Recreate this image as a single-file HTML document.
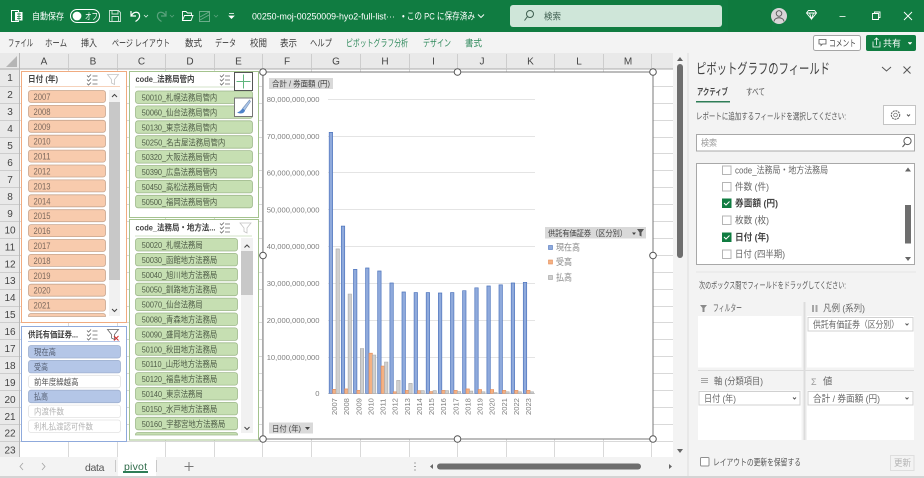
<!DOCTYPE html>
<html lang="ja"><head><meta charset="utf-8"><title>Excel pivot</title>
<style>
html,body{margin:0;padding:0;background:#fff;overflow:hidden}
svg{display:block}
text{font-family:"Liberation Sans","Noto Sans CJK JP",sans-serif;font-size:9px;fill:#555}
.w text{fill:#fff}
.ax text{font-size:7.6px;fill:#7f7f7f}
.h text{font-size:10px;fill:#444;text-anchor:middle}
.rb text{font-size:9.6px;fill:#3c3c3c}
.o rect{fill:#f8cbad;stroke:#c8a68f;stroke-width:.8}
.o text{fill:#7d6a5e}
.g rect{fill:#c6dfb2;stroke:#9fb98c;stroke-width:.8}
.g text{fill:#4f5c47;font-size:8.4px}
.b rect{fill:#b4c6e7;stroke:#9fb0cf;stroke-width:.8}
.b text{fill:#555f72;font-size:8.4px}
.n rect{fill:#fff;stroke:#e2e2e2;stroke-width:.8}
.n text{font-size:8.4px}
.t text{font-weight:bold;fill:#444;font-size:8.6px}
.ic{fill:none;stroke:#666;stroke-width:.8}
.p text{font-size:9.4px;fill:#666}
</style></head>
<body>
<svg width="924" height="478" viewBox="0 0 924 478" xmlns="http://www.w3.org/2000/svg">
<rect width="924" height="478" fill="#fff"/>

<!-- grid -->
<path fill="none" stroke="#d9d9d9" stroke-width="1" d="M68.5 69V457M117.5 69V457M165.5 69V457M214.5 69V457M262.5 69V457M311.5 69V457M360.5 69V457M409.5 69V457M457.5 69V457M506.5 69V457M554.5 69V457M603.5 69V457M651.5 69V457M20 86.5H673M20 103.5H673M20 120.5H673M20 137.5H673M20 153.5H673M20 170.5H673M20 187.5H673M20 204.5H673M20 221.5H673M20 238.5H673M20 255.5H673M20 272.5H673M20 289.5H673M20 306.5H673M20 322.5H673M20 339.5H673M20 356.5H673M20 373.5H673M20 390.5H673M20 407.5H673M20 424.5H673M20 441.5H673"/>

<!-- title bar -->
<rect width="924" height="32" fill="#107c41"/>
<rect x="728" y="0" width="44" height="32" fill="#0f7a3e"/>
<g class="w">
<rect x="11.5" y="10.5" width="7" height="11" fill="none" stroke="#fff"/><rect x="15" y="12" width="7.5" height="8.5" fill="#fff"/><path d="M17 14h4M17 16.5h4M17 18.5h4M19 12.5v8" stroke="#107c41" stroke-width=".7"/>
<text x="32" y="19.4" textLength="32" lengthAdjust="spacingAndGlyphs" style="font-size:9px">自動保存</text>
<rect x="70.5" y="9.5" width="29" height="13" rx="6.5" fill="none" stroke="#fff"/><circle cx="77" cy="16" r="4.4" fill="#fff"/>
<text x="85" y="19.4" textLength="13" lengthAdjust="spacingAndGlyphs" style="font-size:9px">オフ</text>
<path d="M109.5 10.5h9l2 2v9h-11zM112 10.5v3.5h6v-3.5M112 21.5v-5h6.5v5" fill="none" stroke="#cfe5d8" stroke-width=".9"/>
<path d="M131 11v5h5M131.5 15.5c2-4 7-4.5 8-.5 .6 2.8-1.5 5-4 6.5" fill="none" stroke="#fff" stroke-width="1.2"/>
<path d="M144 15l2 2 2-2" fill="none" stroke="#dfeee5" stroke-width=".8"/>
<path d="M166 11v5h-5M165.5 15.5c-2-4-7-4.5-8-.5-.6 2.8 1.5 5 4 6.5" fill="none" stroke="#5aa27c" stroke-width="1.2"/>
<path d="M170 15l2 2 2-2" fill="none" stroke="#5aa27c" stroke-width=".8"/>
<path d="M182.5 20.5v-9h3.5l1.500 1.500h4v2M182.500 20.500l2-5h8.500l-2 5z" fill="none" stroke="#fff" stroke-width=".9"/>
<rect x="199.5" y="11.5" width="10" height="10" fill="none" stroke="#6bad8a"/><path d="M200 17l9-5M200 20l9-5" stroke="#6bad8a" stroke-width="1"/>
<path d="M214 15l2 2 2-2" fill="none" stroke="#5aa27c" stroke-width=".8"/>
<path d="M229 13.5h5M229 16l2.5 2.5 2.500-2.500z" fill="#fff" stroke="#fff" stroke-width=".7"/>
<text x="252" y="19.4" textLength="143" lengthAdjust="spacingAndGlyphs" style="font-size:9.5px">00250-moj-00250009-hyo2-full-list···</text>
<text x="402" y="19.4" textLength="73" lengthAdjust="spacingAndGlyphs" style="font-size:9.5px">• この PC に保存済み</text>
<path d="M478 14.5l3 3 3-3" fill="none" stroke="#fff" stroke-width=".9"/>
</g>
<rect x="510" y="5" width="212" height="22" rx="3" fill="#cfe6d9"/>
<circle cx="530" cy="14" r="3.5" fill="none" stroke="#3f5f50"/><path d="M527.5 16.5l-3 4" stroke="#3f5f50"/>
<text x="544" y="19.5" textLength="17" lengthAdjust="spacingAndGlyphs" style="fill:#3f5f50">検索</text>
<circle cx="779" cy="16" r="8" fill="#d9d5d8"/><circle cx="779" cy="13.5" r="2.8" fill="none" stroke="#555" stroke-width=".9"/><path d="M774 21.5c.5-5 9.5-5 10 0" fill="none" stroke="#555" stroke-width=".9"/>
<path d="M806.5 13l2-2.500h6l2 2.500-5 6zM806.500 13h10M809.500 13l2 6 2-6" fill="none" stroke="#fff" stroke-width=".9"/>
<path d="M839.500 16.500h6" stroke="#cfe5d8" stroke-width="1"/>
<path d="M872.500 13.500h6v6h-6zM874.500 13.500v-1.500h5.500v5.500h-1.500" fill="none" stroke="#fff" stroke-width=".9"/>
<path d="M904 12l8 8M912 12l-8 8" stroke="#fff" stroke-width=".9"/>

<!-- ribbon -->
<rect y="32" width="924" height="21" fill="#f3f3f3"/>
<g class="rb">
<text x="8" y="46.5" textLength="25" lengthAdjust="spacingAndGlyphs">ファイル</text>
<text x="45" y="46.5" textLength="22" lengthAdjust="spacingAndGlyphs">ホーム</text>
<text x="81" y="46.5" textLength="16" lengthAdjust="spacingAndGlyphs">挿入</text>
<text x="112" y="46.5" textLength="58" lengthAdjust="spacingAndGlyphs">ページ レイアウト</text>
<text x="185" y="46.5" textLength="17" lengthAdjust="spacingAndGlyphs">数式</text>
<text x="215" y="46.5" textLength="21" lengthAdjust="spacingAndGlyphs">データ</text>
<text x="250" y="46.5" textLength="17" lengthAdjust="spacingAndGlyphs">校閲</text>
<text x="280" y="46.5" textLength="17" lengthAdjust="spacingAndGlyphs">表示</text>
<text x="310" y="46.5" textLength="22" lengthAdjust="spacingAndGlyphs">ヘルプ</text>
<text x="346" y="46.5" textLength="62" lengthAdjust="spacingAndGlyphs" style="fill:#2f8a5c">ピボットグラフ分析</text>
<text x="423" y="46.5" textLength="28" lengthAdjust="spacingAndGlyphs" style="fill:#2f8a5c">デザイン</text>
<text x="465" y="46.5" textLength="17" lengthAdjust="spacingAndGlyphs" style="fill:#2f8a5c">書式</text>
</g>
<rect x="813.5" y="35.5" width="47" height="15" rx="2" fill="#fff" stroke="#a5a5a5"/>
<path d="M819 39.5h7v4.5h-3.5l-1.5 1.5v-1.5h-2z" fill="none" stroke="#555" stroke-width=".8"/>
<text x="829" y="46.5" textLength="27" lengthAdjust="spacingAndGlyphs" style="fill:#444">コメント</text>
<rect x="866" y="35" width="50" height="16" rx="2" fill="#107c41"/>
<path d="M873 41.5v5.5h7v-5.5M876.5 45v-7M874.5 40l2-2 2 2" fill="none" stroke="#fff" stroke-width=".8"/>
<text x="883" y="46.5" textLength="18" lengthAdjust="spacingAndGlyphs" style="fill:#fff">共有</text>
<path d="M908 42.5l2 2 2-2z" fill="#fff" stroke="#fff" stroke-width=".5"/>

<!-- column headers -->
<rect y="53" width="673" height="16" fill="#e9e9e9"/>
<rect y="69" width="20" height="388" fill="#e9e9e9"/>
<path d="M0 69H673" stroke="#ababab"/>
<path d="M19.5 53V457" stroke="#b8b8b8"/>
<path d="M17 56v11H6z" fill="#b5b5b5"/>
<path fill="none" stroke="#cdcdcd" d="M68.5 54V68M117.5 54V68M165.5 54V68M214.5 54V68M262.5 54V68M311.5 54V68M360.5 54V68M409.5 54V68M457.5 54V68M506.5 54V68M554.5 54V68M603.5 54V68M651.5 54V68"/>
<path fill="none" stroke="#cdcdcd" d="M0 86.5H19M0 103.5H19M0 120.5H19M0 137.5H19M0 153.5H19M0 170.5H19M0 187.5H19M0 204.5H19M0 221.5H19M0 238.5H19M0 255.5H19M0 272.5H19M0 289.5H19M0 306.5H19M0 322.5H19M0 339.5H19M0 356.5H19M0 373.5H19M0 390.5H19M0 407.5H19M0 424.5H19M0 441.5H19"/>
<g class="h">
<text x="44" y="64.5">A</text><text x="93" y="64.5">B</text><text x="141.5" y="64.5">C</text><text x="190" y="64.5">D</text><text x="238.5" y="64.5">E</text><text x="287" y="64.5">F</text><text x="336" y="64.5">G</text><text x="385" y="64.5">H</text><text x="433.5" y="64.5">I</text><text x="482" y="64.5">J</text><text x="530.5" y="64.5">K</text><text x="579" y="64.5">L</text><text x="628" y="64.5">M</text>
<text x="10" y="81">1</text><text x="10" y="98">2</text><text x="10" y="115">3</text><text x="10" y="132">4</text><text x="10" y="149">5</text><text x="10" y="166">6</text><text x="10" y="183">7</text><text x="10" y="200">8</text><text x="10" y="217">9</text><text x="10" y="233.5">10</text><text x="10" y="250.5">11</text><text x="10" y="267.5">12</text><text x="10" y="284">13</text><text x="10" y="301">14</text><text x="10" y="318">15</text><text x="10" y="335">16</text><text x="10" y="352">17</text><text x="10" y="369">18</text><text x="10" y="386">19</text><text x="10" y="403">20</text><text x="10" y="420">21</text><text x="10" y="436.5">22</text><text x="10" y="453.5">23</text>
</g>

<!-- vertical sheet scrollbar -->
<rect x="673" y="53" width="15" height="404" fill="#f3f3f3"/>
<path d="M677 61l3-4 3 4z" fill="#666"/><rect x="677" y="64" width="6" height="194" rx="3" fill="#6e6e6e"/><path d="M677 449l3 4 3-4z" fill="#666"/>

<!-- slicer 1 -->
<rect x="21.5" y="71.5" width="105" height="251" fill="#fff" stroke="#f0ab80"/>
<g class="t"><text x="28" y="82" textLength="30" lengthAdjust="spacingAndGlyphs">日付 (年)</text></g>
<path d="M28 86.5H120" stroke="#f6d2bb"/>
<path class="ic" d="M87 75.5l1.5 1.5 2.5-2.5M87 79.5l1.5 1.5 2.5-2.5M87 83.5l1.5 1.5 2.5-2.5M92.5 76h5M92.5 80h5M92.5 84h5"/>
<path class="ic" style="stroke:#c4c4c4" d="M107.5 74.5h11l-4 5v5l-3-1.5v-3.5z"/>
<g class="o">
<rect x="28.5" y="90.5" width="77" height="12" rx="2.5"/><text x="33.5" y="100" textLength="17" lengthAdjust="spacingAndGlyphs">2007</text>
<rect x="28.5" y="105.4" width="77" height="12" rx="2.5"/><text x="33.5" y="114.9" textLength="17" lengthAdjust="spacingAndGlyphs">2008</text>
<rect x="28.5" y="120.3" width="77" height="12" rx="2.5"/><text x="33.5" y="129.8" textLength="17" lengthAdjust="spacingAndGlyphs">2009</text>
<rect x="28.5" y="135.2" width="77" height="12" rx="2.5"/><text x="33.5" y="144.7" textLength="17" lengthAdjust="spacingAndGlyphs">2010</text>
<rect x="28.5" y="150.1" width="77" height="12" rx="2.5"/><text x="33.5" y="159.6" textLength="17" lengthAdjust="spacingAndGlyphs">2011</text>
<rect x="28.5" y="165" width="77" height="12" rx="2.5"/><text x="33.5" y="174.5" textLength="17" lengthAdjust="spacingAndGlyphs">2012</text>
<rect x="28.5" y="179.9" width="77" height="12" rx="2.5"/><text x="33.5" y="189.4" textLength="17" lengthAdjust="spacingAndGlyphs">2013</text>
<rect x="28.5" y="194.8" width="77" height="12" rx="2.5"/><text x="33.5" y="204.3" textLength="17" lengthAdjust="spacingAndGlyphs">2014</text>
<rect x="28.5" y="209.7" width="77" height="12" rx="2.5"/><text x="33.5" y="219.2" textLength="17" lengthAdjust="spacingAndGlyphs">2015</text>
<rect x="28.5" y="224.6" width="77" height="12" rx="2.5"/><text x="33.5" y="234.1" textLength="17" lengthAdjust="spacingAndGlyphs">2016</text>
<rect x="28.5" y="239.5" width="77" height="12" rx="2.5"/><text x="33.5" y="249" textLength="17" lengthAdjust="spacingAndGlyphs">2017</text>
<rect x="28.5" y="254.4" width="77" height="12" rx="2.5"/><text x="33.5" y="263.9" textLength="17" lengthAdjust="spacingAndGlyphs">2018</text>
<rect x="28.5" y="269.3" width="77" height="12" rx="2.5"/><text x="33.5" y="278.8" textLength="17" lengthAdjust="spacingAndGlyphs">2019</text>
<rect x="28.5" y="284.2" width="77" height="12" rx="2.5"/><text x="33.5" y="293.7" textLength="17" lengthAdjust="spacingAndGlyphs">2020</text>
<rect x="28.5" y="299.1" width="77" height="12" rx="2.5"/><text x="33.5" y="308.6" textLength="17" lengthAdjust="spacingAndGlyphs">2021</text>
<path d="M28.5 316.5V316c0-1.500 1-2.500 3-2.500h71c2 0 3 1 3 2.500v.5z" fill="#f8cbad" stroke="#c8a68f" stroke-width=".8"/>
</g>
<rect x="109" y="90" width="11" height="226" fill="#f1f1f1"/><rect x="109" y="102" width="11" height="178" fill="#c8c8c8"/>
<path d="M112 97l2.5-2.500 2.500 2.500M112 309l2.500 2.500 2.500-2.500" fill="none" stroke="#444" stroke-width="1"/>

<!-- slicer 2 -->
<rect x="129.5" y="71.5" width="129" height="146" fill="#fff" stroke="#a4c38e"/>
<g class="t"><text x="135.5" y="82" textLength="59" lengthAdjust="spacingAndGlyphs">code_法務局管内</text></g>
<path d="M135 87H252" stroke="#d3e3c8"/>
<path class="ic" d="M220 75.5l1.5 1.5 2.5-2.5M220 79.5l1.5 1.5 2.5-2.5M220 83.5l1.5 1.5 2.5-2.5M225 76h5M225 80h5M225 84h5"/>
<g class="g">
<rect x="135.5" y="91" width="117" height="12.5" rx="2.5"/><text x="141.7" y="100.6" textLength="75.5" lengthAdjust="spacingAndGlyphs">50010_札幌法務局管内</text>
<rect x="135.5" y="105.9" width="117" height="12.5" rx="2.5"/><text x="141.7" y="115.5" textLength="75.5" lengthAdjust="spacingAndGlyphs">50060_仙台法務局管内</text>
<rect x="135.5" y="120.8" width="117" height="12.5" rx="2.5"/><text x="141.7" y="130.4" textLength="75.5" lengthAdjust="spacingAndGlyphs">50130_東京法務局管内</text>
<rect x="135.5" y="135.7" width="117" height="12.5" rx="2.5"/><text x="141.7" y="145.3" textLength="83.5" lengthAdjust="spacingAndGlyphs">50250_名古屋法務局管内</text>
<rect x="135.5" y="150.6" width="117" height="12.5" rx="2.5"/><text x="141.7" y="160.2" textLength="75.5" lengthAdjust="spacingAndGlyphs">50320_大阪法務局管内</text>
<rect x="135.5" y="165.5" width="117" height="12.5" rx="2.5"/><text x="141.7" y="175.1" textLength="75.5" lengthAdjust="spacingAndGlyphs">50390_広島法務局管内</text>
<rect x="135.5" y="180.4" width="117" height="12.5" rx="2.5"/><text x="141.7" y="190" textLength="75.5" lengthAdjust="spacingAndGlyphs">50450_高松法務局管内</text>
<rect x="135.5" y="195.3" width="117" height="12.5" rx="2.5"/><text x="141.7" y="204.9" textLength="75.5" lengthAdjust="spacingAndGlyphs">50500_福岡法務局管内</text>
</g>
<rect x="234.5" y="72.5" width="18" height="18" fill="#fff" stroke="#555"/><path d="M243.5 74.5v14M236.5 81.5h14" stroke="#5fb57d" stroke-width="1"/>
<rect x="234.5" y="98" width="18" height="18.5" fill="#fff" stroke="#777"/>
<path d="M249.5 100l-7 8.5 2 2 6-9z" fill="#a9c4e8" stroke="#7b93b5" stroke-width=".6"/><path d="M243 108.5c-2 .5-2 3-6 4 3 1.5 7 1.5 8-2z" fill="#4d83c9"/>

<!-- slicer 3 -->
<rect x="129.5" y="219.5" width="129" height="220.5" fill="#fff" stroke="#a4c38e"/>
<g class="t"><text x="135.5" y="230.5" textLength="80" lengthAdjust="spacingAndGlyphs">code_法務局・地方法...</text></g>
<path d="M135 236H252" stroke="#d3e3c8"/>
<path class="ic" d="M220 223.5l1.5 1.5 2.5-2.5M220 227.5l1.5 1.5 2.5-2.5M220 231.5l1.5 1.5 2.5-2.5M225 224h5M225 228h5M225 232h5"/>
<path class="ic" style="stroke:#c4c4c4" d="M240 223h11l-4 5v5l-3-1.5v-3.5z"/>
<g class="g">
<rect x="135.5" y="238.5" width="102" height="12.5" rx="2.5"/><text x="141.7" y="248" textLength="61" lengthAdjust="spacingAndGlyphs">50020_札幌法務局</text>
<rect x="135.5" y="253.4" width="102" height="12.5" rx="2.5"/><text x="141.7" y="262.9" textLength="75.5" lengthAdjust="spacingAndGlyphs">50030_函館地方法務局</text>
<rect x="135.5" y="268.3" width="102" height="12.5" rx="2.5"/><text x="141.7" y="277.8" textLength="75.5" lengthAdjust="spacingAndGlyphs">50040_旭川地方法務局</text>
<rect x="135.5" y="283.2" width="102" height="12.5" rx="2.5"/><text x="141.7" y="292.7" textLength="75.5" lengthAdjust="spacingAndGlyphs">50050_釧路地方法務局</text>
<rect x="135.5" y="298.1" width="102" height="12.5" rx="2.5"/><text x="141.7" y="307.6" textLength="61" lengthAdjust="spacingAndGlyphs">50070_仙台法務局</text>
<rect x="135.5" y="313" width="102" height="12.5" rx="2.5"/><text x="141.7" y="322.5" textLength="75.5" lengthAdjust="spacingAndGlyphs">50080_青森地方法務局</text>
<rect x="135.5" y="327.9" width="102" height="12.5" rx="2.5"/><text x="141.7" y="337.4" textLength="75.5" lengthAdjust="spacingAndGlyphs">50090_盛岡地方法務局</text>
<rect x="135.5" y="342.8" width="102" height="12.5" rx="2.5"/><text x="141.7" y="352.3" textLength="75.5" lengthAdjust="spacingAndGlyphs">50100_秋田地方法務局</text>
<rect x="135.5" y="357.7" width="102" height="12.5" rx="2.5"/><text x="141.7" y="367.2" textLength="75.5" lengthAdjust="spacingAndGlyphs">50110_山形地方法務局</text>
<rect x="135.5" y="372.6" width="102" height="12.5" rx="2.5"/><text x="141.7" y="382.1" textLength="75.5" lengthAdjust="spacingAndGlyphs">50120_福島地方法務局</text>
<rect x="135.5" y="387.5" width="102" height="12.5" rx="2.5"/><text x="141.7" y="397" textLength="61" lengthAdjust="spacingAndGlyphs">50140_東京法務局</text>
<rect x="135.5" y="402.4" width="102" height="12.5" rx="2.5"/><text x="141.7" y="411.9" textLength="75.5" lengthAdjust="spacingAndGlyphs">50150_水戸地方法務局</text>
<rect x="135.5" y="417.3" width="102" height="12.5" rx="2.5"/><text x="141.7" y="426.8" textLength="83.5" lengthAdjust="spacingAndGlyphs">50160_宇都宮地方法務局</text>
<path d="M135.5 435v-.5c0-1 1-2 3-2h96c2 0 3 1 3 2v.5z" fill="#c6dfb2" stroke="#9fb98c" stroke-width=".8"/>
</g>
<rect x="241" y="238" width="12" height="195" fill="#f1f1f1"/><rect x="241" y="251" width="12" height="44" fill="#c8c8c8"/>
<path d="M244.5 247.5l2.5-2.5 2.5 2.5M244.5 427l2.5 2.5 2.5-2.5" fill="none" stroke="#444" stroke-width="1"/>

<!-- slicer 4 -->
<rect x="21.5" y="326.5" width="105" height="115" fill="#fff" stroke="#8faadc"/>
<g class="t"><text x="28" y="337.5" textLength="50" lengthAdjust="spacingAndGlyphs">供託有価証券...</text></g>
<path d="M28 341.5H120" stroke="#b4c6e7"/>
<path class="ic" d="M87 330.5l1.5 1.5 2.5-2.5M87 334.5l1.5 1.5 2.5-2.5M87 338.5l1.5 1.5 2.5-2.5M92.5 331h5M92.5 335h5M92.5 339h5"/>
<path class="ic" d="M107.5 329.5h11l-4 5v5l-3-1.5v-3.5z"/><path d="M114 336l4.5 4.5M118.5 336l-4.5 4.5" stroke="#d0312d" stroke-width="1"/>
<g class="b">
<rect x="28.5" y="345.5" width="92" height="12.5" rx="2.5"/><text x="34" y="355" textLength="22" lengthAdjust="spacingAndGlyphs">現在高</text>
<rect x="28.5" y="360.4" width="92" height="12.5" rx="2.5"/><text x="34" y="369.9" textLength="14" lengthAdjust="spacingAndGlyphs">受高</text>
<rect x="28.5" y="390.2" width="92" height="12.5" rx="2.5"/><text x="34" y="399.700" textLength="14" lengthAdjust="spacingAndGlyphs">払高</text>
</g>
<g class="n">
<rect x="28.5" y="375.3" width="92" height="12.5" rx="2.5"/><text x="34" y="384.8" textLength="44.5" lengthAdjust="spacingAndGlyphs">前年度繰越高</text>
<rect x="28.5" y="405.1" width="92" height="12.5" rx="2.5"/><text x="34" y="414.6" textLength="30" lengthAdjust="spacingAndGlyphs" style="fill:#b5b5b5">内渡件数</text>
<rect x="28.5" y="420" width="92" height="12.5" rx="2.5"/><text x="34" y="429.5" textLength="59" lengthAdjust="spacingAndGlyphs" style="fill:#b5b5b5">利札払渡認可件数</text>
</g>

<!-- chart -->
<rect x="263" y="72" width="390" height="367" fill="#fff" stroke="#7a7a7a" stroke-width="1"/>
<path fill="none" stroke="#e4e4e4" d="M328 99.5H535M328 136.5H535M328 172.5H535M328 209.5H535M328 246.5H535M328 283.5H535M328 320.5H535M328 357.5H535"/>
<path stroke="#d0d0d0" d="M328 393.5H535"/>
<g class="ax" text-anchor="end">
<text x="319.5" y="102">80,000,000,000</text><text x="319.5" y="139">70,000,000,000</text><text x="319.5" y="175.5">60,000,000,000</text><text x="319.5" y="212.5">50,000,000,000</text><text x="319.5" y="249">40,000,000,000</text><text x="319.5" y="286">30,000,000,000</text><text x="319.5" y="323">20,000,000,000</text><text x="319.5" y="360">10,000,000,000</text><text x="319.5" y="396">0</text>
</g>
<path fill="#8faadc" stroke="#4f75bd" stroke-width=".7" d="M329.2 393.3V132.4h3.4V393.3zM341.3 393.3V226.1h3.4V393.3zM353.5 393.3V269.4h3.4V393.3zM365.6 393.3V268h3.4V393.3zM377.7 393.3V271h3.4V393.3zM389.9 393.3V283h3.4V393.3zM402 393.3V292h3.4V393.3zM414.1 393.3V292.6h3.4V393.3zM426.2 393.3V292.6h3.4V393.3zM438.4 393.3V293h3.4V393.3zM450.5 393.3V292.6h3.4V393.3zM462.6 393.3V290.7h3.4V393.3zM474.8 393.3V287.8h3.4V393.3zM486.9 393.3V286h3.4V393.3zM499 393.3V284.9h3.4V393.3zM511.2 393.3V283h3.4V393.3zM523.3 393.3V282.3h3.4V393.3z"/>
<path fill="#f4b183" stroke="#e58a55" stroke-width=".6" d="M332.6 393.3V389.3h3.4V393.3zM344.7 393.3V388.9h3.4V393.3zM356.9 393.3V390.4h3.4V393.3zM369 393.3V353.2h3.4V393.3zM381.1 393.3V366.1h3.4V393.3zM393.3 393.3V391.8h3.4V393.3zM405.4 393.3V390.4h3.4V393.3zM417.5 393.3V390.7h3.4V393.3zM429.6 393.3V391.5h3.4V393.3zM441.8 393.3V390.4h3.4V393.3zM453.9 393.3V390.4h3.4V393.3zM466 393.3V388.9h3.4V393.3zM478.2 393.3V389.6h3.4V393.3zM490.3 393.3V389.6h3.4V393.3zM502.4 393.3V390.4h3.4V393.3zM514.6 393.3V390.4h3.4V393.3zM526.7 393.3V390.4h3.4V393.3z"/>
<path fill="#cfcfcf" stroke="#a9a9a9" stroke-width=".6" d="M336 393.3V248.9h3.4V393.3zM348.1 393.3V294h3.4V393.3zM360.3 393.3V348.5h3.4V393.3zM372.4 393.3V355h3.4V393.3zM384.5 393.3V362h3.4V393.3zM396.7 393.3V380.4h3.4V393.3zM408.8 393.3V383.4h3.4V393.3zM420.9 393.3V390.7h3.4V393.3zM433 393.3V390.7h3.4V393.3zM445.2 393.3V390.7h3.4V393.3zM457.3 393.3V391.5h3.4V393.3zM469.4 393.3V391.1h3.4V393.3zM481.6 393.3V391.8h3.4V393.3zM493.7 393.3V392.6h3.4V393.3zM505.8 393.3V391.8h3.4V393.3zM518 393.3V391.8h3.4V393.3zM530.1 393.3V391.8h3.4V393.3z"/>
<g class="ax">
<text transform="translate(337 415) rotate(-90)">2007</text><text transform="translate(349.1 415) rotate(-90)">2008</text><text transform="translate(361.3 415) rotate(-90)">2009</text><text transform="translate(373.4 415) rotate(-90)">2010</text><text transform="translate(385.5 415) rotate(-90)">2011</text><text transform="translate(397.7 415) rotate(-90)">2012</text><text transform="translate(409.8 415) rotate(-90)">2013</text><text transform="translate(421.9 415) rotate(-90)">2014</text><text transform="translate(434 415) rotate(-90)">2015</text><text transform="translate(446.2 415) rotate(-90)">2016</text><text transform="translate(458.3 415) rotate(-90)">2017</text><text transform="translate(470.4 415) rotate(-90)">2018</text><text transform="translate(482.6 415) rotate(-90)">2019</text><text transform="translate(494.7 415) rotate(-90)">2020</text><text transform="translate(506.8 415) rotate(-90)">2021</text><text transform="translate(519 415) rotate(-90)">2022</text><text transform="translate(531.1 415) rotate(-90)">2023</text>
</g>
<rect x="269" y="78" width="64" height="11" fill="#d9d9d9"/>
<text x="272" y="86.5" textLength="58" lengthAdjust="spacingAndGlyphs" style="font-size:8.2px;fill:#444">合計 / 券面額 (円)</text>
<rect x="269" y="422.5" width="44" height="11" fill="#d9d9d9"/>
<text x="272" y="431.5" textLength="29" lengthAdjust="spacingAndGlyphs" style="font-size:8.2px;fill:#444">日付 (年)</text>
<path d="M305 427h5l-2.5 3z" fill="#444"/>
<rect x="545" y="227" width="101" height="11.500" fill="#d9d9d9"/>
<text x="548" y="236" textLength="79" lengthAdjust="spacingAndGlyphs" style="font-size:8.2px;fill:#444">供託有価証券（区分別）</text>
<path d="M632 232.5h4l-2 2.5z" fill="#444"/><path d="M637 229h7l-2.5 3.5v4l-2-1v-3z" fill="#555"/>
<rect x="548.5" y="245.5" width="4" height="4" fill="#8faadc" stroke="#4f75bd" stroke-width=".6"/>
<rect x="548.5" y="260" width="4" height="4" fill="#f4b183" stroke="#e58a55" stroke-width=".6"/>
<rect x="548.5" y="275.5" width="4" height="4" fill="#cfcfcf" stroke="#a0a0a0" stroke-width=".6"/>
<text x="556" y="250.5" textLength="24" lengthAdjust="spacingAndGlyphs" style="fill:#888">現在高</text>
<text x="556" y="265" textLength="16" lengthAdjust="spacingAndGlyphs" style="fill:#888">受高</text>
<text x="556" y="280.5" textLength="16" lengthAdjust="spacingAndGlyphs" style="fill:#888">払高</text>
<g fill="#fff" stroke="#555" stroke-width="1">
<circle cx="263" cy="72" r="3.3"/><circle cx="457.5" cy="72" r="3.3"/><circle cx="653" cy="72" r="3.3"/><circle cx="263" cy="255.5" r="3.3"/><circle cx="653" cy="255.5" r="3.3"/><circle cx="263" cy="439" r="3.3"/><circle cx="457.5" cy="439" r="3.3"/><circle cx="653" cy="439" r="3.3"/>
</g>

<!-- sheet tabs -->
<rect y="457" width="688" height="19" fill="#f3f3f3"/>
<rect y="476" width="924" height="2" fill="#d4d4d4"/>
<path d="M23 463l-3 3.5 3 3.5M42 463l3 3.5-3 3.5" fill="none" stroke="#a8a8a8" stroke-width=".9"/>
<text x="85" y="471" textLength="19.5" style="font-size:10.5px;fill:#555">data</text>
<path d="M115.5 460v12M156.5 460v12" stroke="#c9c9c9"/>
<rect x="118" y="456" width="38" height="20" fill="#fff"/>
<text x="124" y="470" textLength="23" style="font-size:10.5px;fill:#2f6b4a">pivot</text>
<rect x="123" y="471" width="25" height="2" fill="#2f7d57"/>
<path d="M189 462v9M184.5 466.5h9" stroke="#777" stroke-width="1"/>
<path d="M415 462.5v1M415 466v1M415 469.5v1" stroke="#555" stroke-width="1"/>
<path d="M433 464v5l-3-2.5z" fill="#666"/><rect x="437" y="463.5" width="204" height="6" rx="3" fill="#6e6e6e"/><path d="M669 464v5l3-2.5z" fill="#666"/>

<!-- pane -->
<rect x="688" y="53" width="236" height="423" fill="#f3f3f3"/>
<path d="M688 53V476" stroke="#dcdcdc"/>
<text x="696" y="74" textLength="134" lengthAdjust="spacingAndGlyphs" style="font-size:14.5px;fill:#444">ピボットグラフのフィールド</text>
<path d="M882 67l4.5 4 4.5-4" fill="none" stroke="#555"/><path d="M903.5 66.5l7 7M910.5 66.5l-7 7" stroke="#555"/>
<text x="697" y="95" textLength="31" lengthAdjust="spacingAndGlyphs" style="font-weight:bold;fill:#444">アクティブ</text>
<text x="746" y="95" textLength="19" lengthAdjust="spacingAndGlyphs" style="fill:#555">すべて</text>
<rect x="696" y="101" width="34" height="1.5" fill="#2f7d57"/>
<text x="696" y="119.5" textLength="150" lengthAdjust="spacingAndGlyphs" style="fill:#555">レポートに追加するフィールドを選択してください:</text>
<rect x="883.5" y="105.5" width="32" height="19" fill="#fff" stroke="#c4c4c4"/>
<circle cx="895.5" cy="115" r="4.2" fill="none" stroke="#666" stroke-width="1.1" stroke-dasharray="2 .8"/><circle cx="895.5" cy="115" r="1.8" fill="none" stroke="#666" stroke-width=".7"/>
<path d="M907 114.5l1.5 1.5 1.5-1.5" fill="none" stroke="#555"/>
<rect x="696.5" y="134.5" width="218" height="16.5" fill="#fff" stroke="#a8a8a8"/>
<text x="701" y="146" textLength="16" lengthAdjust="spacingAndGlyphs" style="fill:#999">検索</text>
<circle cx="907.5" cy="141" r="3.6" fill="none" stroke="#555"/><path d="M905 144l-2.5 3" stroke="#555"/>
<rect x="696.5" y="163.5" width="218" height="101" fill="#fff" stroke="#a8a8a8"/>
<g fill="#fff" stroke="#b5b5b5">
<rect x="722.5" y="166" width="8.5" height="8.5"/><rect x="722.5" y="182.5" width="8.5" height="8.5"/><rect x="722.5" y="216" width="8.5" height="8.5"/><rect x="722.5" y="250" width="8.5" height="8.5"/>
</g>
<rect x="722" y="198.5" width="9.5" height="9.5" fill="#107c41"/><path d="M724 203l2 2 3.5-3.5" fill="none" stroke="#fff"/>
<rect x="722" y="232.5" width="9.5" height="9.5" fill="#107c41"/><path d="M724 237l2 2 3.5-3.5" fill="none" stroke="#fff"/>
<g class="p">
<text x="735" y="173.5" textLength="93" lengthAdjust="spacingAndGlyphs">code_法務局・地方法務局</text>
<text x="735" y="190" textLength="34" lengthAdjust="spacingAndGlyphs">件数 (件)</text>
<text x="735" y="206.5" textLength="43" lengthAdjust="spacingAndGlyphs" style="font-weight:bold;fill:#444">券面額 (円)</text>
<text x="735" y="223.5" textLength="34" lengthAdjust="spacingAndGlyphs">枚数 (枚)</text>
<text x="735" y="240.5" textLength="34" lengthAdjust="spacingAndGlyphs" style="font-weight:bold;fill:#444">日付 (年)</text>
<text x="735" y="257.5" textLength="50" lengthAdjust="spacingAndGlyphs">日付 (四半期)</text>
</g>
<path d="M905 171.5l3-4 3 4zM905 257l3 4 3-4z" fill="#666"/><rect x="905" y="205" width="6" height="38.5" fill="#6e6e6e"/>
<path d="M696 272H916" stroke="#e4e4e4"/>
<text x="699" y="288.5" textLength="147" lengthAdjust="spacingAndGlyphs" style="fill:#555">次のボックス間でフィールドをドラッグしてください:</text>
<rect x="698" y="316" width="103.5" height="51.5" fill="#fff"/>
<rect x="807" y="316" width="107" height="51.5" fill="#fff"/>
<rect x="698" y="390.5" width="103.5" height="49.5" fill="#fff"/>
<rect x="807" y="390.5" width="107" height="49.5" fill="#fff"/>
<path d="M804.5 302V440" stroke="#dcdcdc" stroke-width="2"/><path d="M698 370.5H914" stroke="#dcdcdc"/>
<path d="M700 305h7l-2.5 3v4h-2v-4z" fill="#8a8a8a"/>
<path d="M812 305h2v7h-2zM815.5 305h2v7h-2z" fill="#a5a5a5"/>
<path d="M701 378.5h7M701 380.5h7M701 382.5h7" stroke="#a5a5a5"/>
<text x="811" y="385" style="font-size:9px;fill:#999">Σ</text>
<g class="p">
<text x="713" y="311.5" textLength="29" lengthAdjust="spacingAndGlyphs">フィルター</text>
<text x="823" y="311.5" textLength="42" lengthAdjust="spacingAndGlyphs">凡例 (系列)</text>
<text x="714" y="384.5" textLength="49" lengthAdjust="spacingAndGlyphs">軸 (分類項目)</text>
<text x="823" y="384.5" textLength="9">値</text>
</g>
<rect x="808" y="317.5" width="105" height="13.5" fill="#fff" stroke="#d0d0d0"/>
<rect x="699" y="391.5" width="101" height="13.5" fill="#fff" stroke="#d0d0d0"/>
<rect x="808" y="391.5" width="105" height="13.5" fill="#fff" stroke="#d0d0d0"/>
<g class="p">
<text x="813" y="328" textLength="86" lengthAdjust="spacingAndGlyphs">供託有価証券（区分別）</text>
<text x="704" y="402" textLength="32" lengthAdjust="spacingAndGlyphs">日付 (年)</text>
<text x="813" y="402" textLength="67" lengthAdjust="spacingAndGlyphs">合計 / 券面額 (円)</text>
</g>
<path d="M905.5 323.5l1.5 1.5 1.5-1.5M793 397.5l1.5 1.5 1.5-1.5M905.5 397.5l1.5 1.5 1.5-1.5" fill="none" stroke="#555"/>
<rect x="700.5" y="457.5" width="8.5" height="8.5" rx="1" fill="#fff" stroke="#8f8f8f"/>
<text x="713" y="465.5" textLength="88" lengthAdjust="spacingAndGlyphs" style="fill:#555">レイアウトの更新を保留する</text>
<rect x="890.5" y="455.5" width="23.5" height="15" fill="#f3f3f3" stroke="#dedede"/>
<text x="894" y="466" textLength="17" lengthAdjust="spacingAndGlyphs" style="fill:#b5b5b5">更新</text>
</svg>
</body></html>
